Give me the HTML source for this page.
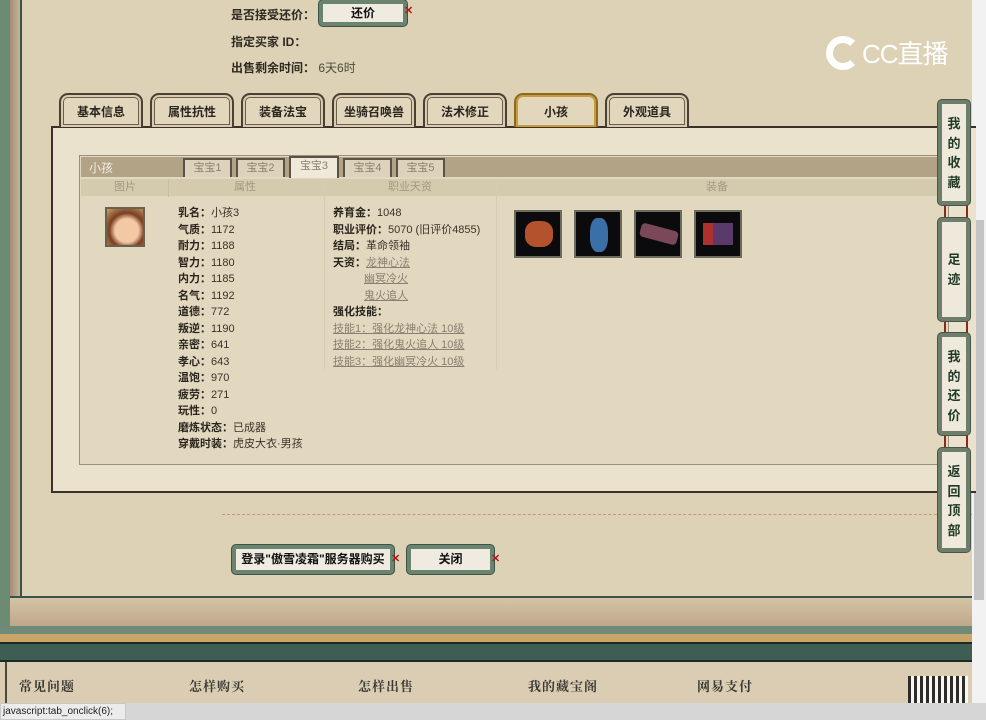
<!DOCTYPE html>
<html><head><meta charset="utf-8"><style>
*{margin:0;padding:0;box-sizing:border-box}
body{width:986px;height:720px;overflow:hidden;position:relative;background:#ddd1b6;font-family:"Liberation Sans","Noto Sans CJK SC",sans-serif;font-size:11px;color:#3a3228}
.a{position:absolute}
.lbl{font-weight:bold;font-size:12px;color:#2e2a22}
.tab{position:absolute;top:93px;height:34px;border:2px solid #4a4034;border-bottom:none;border-radius:9px 9px 0 0;background:#e2d6bd;box-shadow:inset 0 0 0 2px #d8cbb0,inset 0 0 0 3px #6a5e4e;text-align:center;line-height:34px;font-weight:bold;font-size:12px;color:#2a261e}
.btn{position:absolute;height:26px;background:#f0ebe0;border:4px solid #6a8470;border-radius:4px;box-shadow:0 0 0 1px #3d5347;text-align:center;line-height:18px;font-weight:bold;font-size:12px;color:#111}
.bt{position:absolute;top:158px;height:19px;background:#ddd3bd;border:2px solid #5a5244;border-bottom:none;text-align:center;line-height:17px;font-size:11px;color:#8a806e}
.col div{height:16.5px;line-height:16.5px;white-space:nowrap}
.col b{color:#2a241c}
.u{text-decoration:underline;color:#8a8070}
.eq{position:absolute;top:210px;width:48px;height:48px;background:#0b0a0c;border:2px solid #6b6a5c}
.side{position:absolute;left:938px;width:32px;background:#efe9dc;border:4px solid #6d7f6a;border-radius:4px;box-shadow:0 0 0 1px #4a5448;text-align:center;font-weight:bold;font-size:13px;color:#1e3a26;line-height:19.5px}
.ft{position:absolute;top:676px;font-size:13px;font-weight:bold;color:#3a3a34;font-family:"Noto Serif CJK SC",serif;letter-spacing:1px}
</style></head><body>
<div class="a" style="left:0;top:0;width:10px;height:600px;background:#6d8a72"></div>
<div class="a" style="left:10px;top:0;width:10px;height:600px;background:linear-gradient(90deg,#a38d75,#c6b39b)"></div>
<div class="a" style="left:20px;top:0;width:2px;height:600px;background:#2f5646"></div>
<div class="a" style="left:972px;top:0;width:14px;height:705px;background:#f2f2f2"></div>
<div class="a" style="left:974px;top:220px;width:10px;height:380px;background:#c4c4c4"></div>

<div class="a lbl" style="left:231px;top:6px">是否接受还价：</div>
<div class="btn" style="left:319px;top:0;width:88px">还价</div>
<div class="a" style="left:404px;top:4px;color:#b01a1a;font-weight:bold">✕</div>
<div class="a lbl" style="left:231px;top:33px">指定买家 ID：</div>
<div class="a lbl" style="left:231px;top:59px">出售剩余时间：<span style="font-weight:normal;color:#4a4a3a">&nbsp;6天6时</span></div>
<div class="a" style="left:826px;top:36px;width:34px;height:34px;border-radius:50%;border:7px solid #fff;border-right-color:transparent"></div>
<div class="a" style="left:862px;top:34px;font-size:26px;color:#fff;letter-spacing:-1px">CC直播</div>

<div class="a" style="left:51px;top:126px;width:925px;height:367px;border:2px solid #3a3128;border-right:none;background:#ebe2cd"></div>
<div class="tab" style="left:59px;width:84px">基本信息</div>
<div class="tab" style="left:150px;width:84px">属性抗性</div>
<div class="tab" style="left:241px;width:84px">装备法宝</div>
<div class="tab" style="left:332px;width:84px">坐骑召唤兽</div>
<div class="tab" style="left:423px;width:84px">法术修正</div>
<div class="tab" style="left:514px;width:84px;border-color:#8a6a20;box-shadow:inset 0 0 0 2px #c89a3a">小孩</div>
<div class="tab" style="left:605px;width:84px">外观道具</div>

<div class="a" style="left:79px;top:155px;width:870px;height:310px;border:1px solid #9a907e;background:#e2d8c0"></div>
<div class="a" style="left:81px;top:157px;width:860px;height:20px;background:#b2a386"></div>
<div class="a" style="left:89px;top:159px;color:#f3eee2;font-size:12px">小孩</div>
<div class="bt" style="left:183px;width:49px">宝宝1</div>
<div class="bt" style="left:236px;width:49px">宝宝2</div>
<div class="bt" style="left:289px;width:50px;background:#efe9da;top:156px;height:22px">宝宝3</div>
<div class="bt" style="left:343px;width:49px">宝宝4</div>
<div class="bt" style="left:396px;width:49px">宝宝5</div>
<div class="a" style="left:81px;top:179px;width:860px;height:17px;background:#d4caad;color:#a09a86;font-size:11px;line-height:17px">
<span class="a" style="left:33px">图片</span><span class="a" style="left:153px">属性</span><span class="a" style="left:307px">职业天资</span><span class="a" style="left:625px">装备</span></div>
<div class="a" style="left:168px;top:179px;width:1px;height:18px;background:#c8bea4"></div>
<div class="a" style="left:324px;top:179px;width:1px;height:190px;background:#d6ccb2"></div>
<div class="a" style="left:496px;top:179px;width:1px;height:190px;background:#d6ccb2"></div>
<div class="a" style="left:105px;top:207px;width:40px;height:40px;border:2px solid #6a6050;background:radial-gradient(circle at 55% 60%,#f3c9a4 0 40%,#7a3d22 60%,#c9a46a 100%)"></div>

<div class="a col" style="left:178px;top:205px">
<div><b>乳名：</b>小孩3</div><div><b>气质：</b>1172</div><div><b>耐力：</b>1188</div><div><b>智力：</b>1180</div><div><b>内力：</b>1185</div><div><b>名气：</b>1192</div><div><b>道德：</b>772</div><div><b>叛逆：</b>1190</div><div><b>亲密：</b>641</div><div><b>孝心：</b>643</div><div><b>温饱：</b>970</div><div><b>疲劳：</b>271</div><div><b>玩性：</b>0</div><div><b>磨炼状态：</b>已成器</div><div><b>穿戴时装：</b>虎皮大衣·男孩</div>
</div>
<div class="a col" style="left:333px;top:205px">
<div><b>养育金：</b>1048</div><div><b>职业评价：</b>5070 (旧评价4855)</div><div><b>结局：</b>革命领袖</div><div><b>天资：</b><span class="u">龙神心法</span></div><div style="padding-left:31px"><span class="u">幽冥冷火</span></div><div style="padding-left:31px"><span class="u">鬼火追人</span></div><div><b>强化技能：</b></div><div class="u">技能1：强化龙神心法 10级</div><div class="u">技能2：强化鬼火追人 10级</div><div class="u">技能3：强化幽冥冷火 10级</div>
</div>
<div class="eq" style="left:514px"><div style="margin:9px;width:28px;height:26px;border-radius:40%;background:#b3522c"></div></div>
<div class="eq" style="left:574px"><div style="margin:6px 14px;width:18px;height:34px;border-radius:40%;background:#3b6fa8"></div></div>
<div class="eq" style="left:634px"><div style="margin:15px 4px;width:38px;height:14px;border-radius:4px;background:#7a4858;transform:rotate(15deg)"></div></div>
<div class="eq" style="left:694px"><div style="margin:11px 7px;width:30px;height:22px;background:#5a3a6a;border-left:10px solid #b03030"></div></div>

<div class="a" style="left:222px;top:514px;width:750px;border-top:1px dashed #c09a72"></div>
<div class="btn" style="left:232px;top:545px;width:162px;height:29px;line-height:21px">登录"傲雪凌霜"服务器购买</div>
<div class="a" style="left:391px;top:552px;color:#b01a1a;font-weight:bold">✕</div>
<div class="btn" style="left:407px;top:545px;width:87px;height:29px;line-height:21px">关闭</div>
<div class="a" style="left:491px;top:552px;color:#b01a1a;font-weight:bold">✕</div>

<div class="a" style="left:944px;top:195px;width:24px;height:260px;border-left:2px solid #8a2a1a;border-right:2px solid #8a2a1a"></div>
<div class="side" style="top:100px;height:105px;padding-top:10px">我<br>的<br>收<br>藏</div>
<div class="side" style="top:218px;height:103px;padding-top:28px">足<br>迹</div>
<div class="side" style="top:333px;height:102px;padding-top:10px">我<br>的<br>还<br>价</div>
<div class="side" style="top:448px;height:104px;padding-top:10px">返<br>回<br>顶<br>部</div>

<div class="a" style="left:10px;top:596px;width:962px;height:30px;background:linear-gradient(#d4c3a6,#bfa88a);border-top:2px solid #3a5446"></div>
<div class="a" style="left:0;top:600px;width:10px;height:30px;background:#6d8a72"></div>
<div class="a" style="left:0;top:626px;width:972px;height:8px;background:#6f8a78"></div>
<div class="a" style="left:0;top:634px;width:972px;height:8px;background:#c9a56a"></div>
<div class="a" style="left:0;top:642px;width:972px;height:20px;background:#3e5e54;border-top:2px solid #1c2a24;border-bottom:2px solid #1c2a24"></div>
<div class="a" style="left:0;top:662px;width:972px;height:58px;background:#dbcdb3"></div>
<div class="a" style="left:5px;top:662px;width:2px;height:58px;background:#4a4a3a"></div>
<div class="ft" style="left:19px">常见问题</div>
<div class="ft" style="left:189px">怎样购买</div>
<div class="ft" style="left:358px">怎样出售</div>
<div class="ft" style="left:528px">我的藏宝阁</div>
<div class="ft" style="left:697px">网易支付</div>
<div class="a" style="left:908px;top:676px;width:60px;height:36px;background:repeating-linear-gradient(90deg,#111 0 3px,#fff 3px 6px),#fff;opacity:.85"></div>
<div class="a" style="left:0;top:703px;width:986px;height:17px;background:#d6d6d6"></div>
<div class="a" style="left:0;top:703px;height:17px;background:#ececec;border:1px solid #c8c8c8;font-size:10px;line-height:15px;padding-left:2px;color:#222;width:126px">javascript:tab_onclick(6);</div>
</body></html>
